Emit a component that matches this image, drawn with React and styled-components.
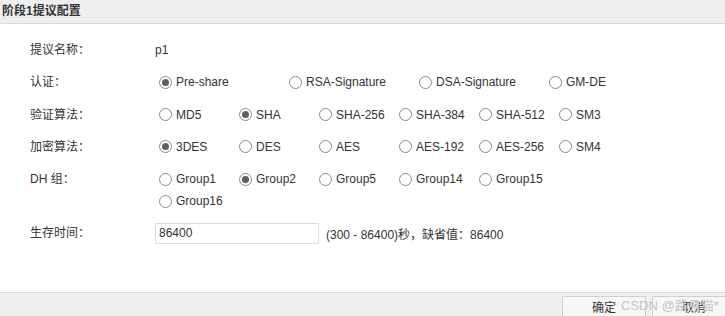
import React from 'react';
import styled, { createGlobalStyle } from 'styled-components';

const GlobalStyle = createGlobalStyle`
    html, body {
        margin: 0;
        padding: 0;
        overflow: hidden;
        background: #fff;
    }
    body {
        font-family: "Liberation Sans", Arial, "Noto Sans CJK SC", sans-serif;
        font-size: 12px;
        color: #333;
    }
`

const rows = [
    { label: '验证算法：', name: 'auth', value: 'SHA', wrap: 480, options: ['MD5', 'SHA', 'SHA-256', 'SHA-384', 'SHA-512', 'SM3'] },
    { label: '加密算法：', name: 'enc', value: '3DES', wrap: 480, options: ['3DES', 'DES', 'AES', 'AES-192', 'AES-256', 'SM4'] },
    { label: 'DH 组：', name: 'dh', value: 'Group2', wrap: 400, options: ['Group1', 'Group2', 'Group5', 'Group14', 'Group15', 'Group16'] },
]

const Radio = ({ checked, width, children }) => (
    <Option width={width}>
        <Circle checked={checked} />
        <span>{children}</span>
    </Option>
)

export default function App() {
    return (
        <Dialog>
            <GlobalStyle />
            <Header>阶段1提议配置</Header>
            <Body>
                <Row>
                    <Label>提议名称：</Label>
                    <Value>p1</Value>
                </Row>
                <Row>
                    <Label>认证：</Label>
                    <Options wrap={520}>
                        {['Pre-share', 'RSA-Signature', 'DSA-Signature', 'GM-DE'].map(o => (
                            <Radio key={o} width={130} checked={o === 'Pre-share'}>{o}</Radio>
                        ))}
                    </Options>
                </Row>
                {rows.map(r => (
                    <Row key={r.name}>
                        <Label>{r.label}</Label>
                        <Options wrap={r.wrap}>
                            {r.options.map(o => (
                                <Radio key={o} width={80} checked={o === r.value}>{o}</Radio>
                            ))}
                        </Options>
                    </Row>
                ))}
                <Row>
                    <Label>生存时间：</Label>
                    <InputWrap>
                        <Input defaultValue="86400" />
                        <Hint>(300 - 86400)秒，缺省值：86400</Hint>
                    </InputWrap>
                </Row>
            </Body>
            <Footer>
                <Button>确定</Button>
                <Button>取消</Button>
                <Watermark>CSDN @路易猫*</Watermark>
            </Footer>
        </Dialog>
    )
}

const Dialog = styled.div`
    width: 737px;
    height: 316px;
    display: flex;
    flex-direction: column;
`

const Header = styled.div`
    height: 24px;
    flex: none;
    box-sizing: border-box;
    background: #efefef;
    border-bottom: 1px solid #dadada;
    padding: 0 2px;
    font-weight: 700;
    font-size: 12px;
    line-height: 22px;
    color: #333;
`

const Body = styled.div`
    flex: 1;
    display: flex;
    flex-direction: column;
    gap: 10.3px;
    padding: 15px 0 0 30px;
`

const Row = styled.div`
    display: flex;
    align-items: flex-start;
`

const Label = styled.div`
    width: 125px;
    flex: none;
    line-height: 22px;
`

const Value = styled.div`
    line-height: 22px;
`

const Options = styled.div`
    display: flex;
    flex-wrap: wrap;
    width: ${p => p.wrap}px;
`

const Option = styled.label`
    display: flex;
    align-items: center;
    gap: 4px;
    width: ${p => p.width}px;
    height: 22px;
    padding-left: 4px;
    box-sizing: border-box;
    white-space: nowrap;
`

const Circle = styled.span`
    width: 13px;
    height: 13px;
    box-sizing: border-box;
    border-radius: 50%;
    border: 1px solid #8a8a8a;
    background: #fff;
    display: flex;
    align-items: center;
    justify-content: center;
    &::after {
        content: '';
        width: 7px;
        height: 7px;
        border-radius: 50%;
        background: ${p => (p.checked ? '#5f5f5f' : 'transparent')};
    }
`

const InputWrap = styled.div`
    display: flex;
    align-items: center;
    gap: 7px;
    height: 22px;
`

const Input = styled.input`
    width: 164px;
    height: 21px;
    box-sizing: border-box;
    border: 1px solid #dcdcdc;
    padding: 0 3px;
    font: inherit;
    color: #333;
    outline: none;
`

const Hint = styled.span`
    white-space: nowrap;
`

const Footer = styled.div`
    position: relative;
    height: 24px;
    flex: none;
    box-sizing: border-box;
    background: #efefef;
    border-top: 1px solid #dadada;
    display: flex;
    justify-content: flex-end;
    gap: 6px;
    padding: 3px 1px 0 0;
    overflow: hidden;
`

const Button = styled.button`
    width: 84px;
    height: 20px;
    flex: none;
    border: 1px solid #cfcfcf;
    border-bottom: none;
    border-radius: 2px 2px 0 0;
    background: #f7f7f7;
    font: inherit;
    font-size: 12px;
    line-height: 18px;
    color: #333;
    padding: 2px 0 0;
`

const Watermark = styled.span`
    position: absolute;
    left: 621px;
    top: 2px;
    font-size: 13px;
    color: #c4c4c4;
    white-space: nowrap;
    pointer-events: none;
`
